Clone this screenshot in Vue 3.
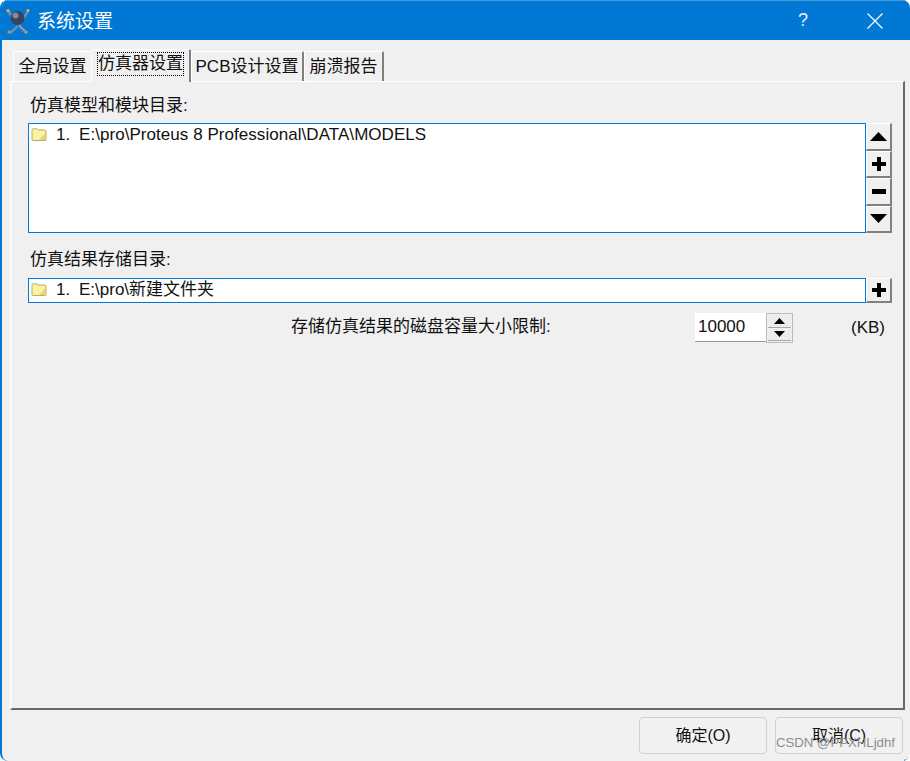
<script setup>
const tabs = [
  { label: '全局设置', cls: 'w1' },
  { label: '仿真器设置', cls: 'w2 active' },
  { label: 'PCB设计设置', cls: 'w3' },
  { label: '崩溃报告', cls: 'w4' },
]
</script>

<template>
  <div class="window">
    <header class="titlebar">
      <svg class="logo" width="26" height="28" viewBox="0 0 26 28">
        <path d="M3 4C8 12 14 21 22 26" stroke="#8fb0d8" stroke-width="2.500" fill="none"/>
        <path d="M23 4C18 13 12 21 5 26" stroke="#6d8dbc" stroke-width="2.500" fill="none"/>
        <path d="M3 4C9 15 14 22 22 26" stroke="#41587f" stroke-width="1" fill="none"/>
        <circle cx="12.500" cy="11" r="7" fill="#39445c"/>
        <circle cx="10.500" cy="8.500" r="3" fill="#7f8ba3"/>
        <circle cx="3" cy="3.500" r="1.600" fill="#d8b24c"/>
        <circle cx="23" cy="3.500" r="1.600" fill="#d8b24c"/>
        <circle cx="4" cy="25" r="1.600" fill="#c79a3a"/>
        <circle cx="21" cy="25" r="1.600" fill="#c79a3a"/>
      </svg>
      <span class="title">系统设置</span>
      <span class="help">?</span>
      <svg class="close" width="16" height="16" viewBox="0 0 16 16">
        <path d="M0.500 0.500 15.500 15.500M15.500 0.500 0.500 15.500" stroke="#fff" stroke-width="1.200" fill="none"/>
      </svg>
    </header>

    <div class="client">
      <nav class="tabs">
        <div v-for="t in tabs" :key="t.label" class="tab" :class="t.cls">
          <span class="tab-text">{{ t.label }}</span>
        </div>
      </nav>

      <section class="panel">
        <div class="label first">仿真模型和模块目录:</div>
        <div class="list-row">
          <div class="list tall">
            <svg class="folder" width="16" height="13" viewBox="0 0 16 13">
              <path d="M1 3V1.500L2 .8H6L7 2H14L15 3V12L14 12.500H2L1 12Z" fill="#faf29e" stroke="#b5ad6c" stroke-width="1"/>
              <path d="M8 12 14.500 5V12Z" fill="#f0d070"/>
            </svg>
            <span class="num">1.</span>
            <span class="path wide">E:\pro\Proteus 8 Professional\DATA\MODELS</span>
          </div>
          <div class="btn-col">
            <button class="sq"><svg width="17" height="9" viewBox="0 0 17 9"><path d="M8.500 0 17 9H0Z" fill="#000"/></svg></button>
            <button class="sq"><svg width="14" height="14" viewBox="0 0 14 14"><path d="M5 0h4v5h5v4H9v5H5V9H0V5h5Z" fill="#000"/></svg></button>
            <button class="sq"><svg width="14" height="5" viewBox="0 0 14 5"><path d="M0 0h14v5H0Z" fill="#000"/></svg></button>
            <button class="sq"><svg width="17" height="9" viewBox="0 0 17 9"><path d="M0 0H17L8.500 9Z" fill="#000"/></svg></button>
          </div>
        </div>

        <div class="label second">仿真结果存储目录:</div>
        <div class="list-row">
          <div class="list short">
            <svg class="folder" width="16" height="13" viewBox="0 0 16 13">
              <path d="M1 3V1.500L2 .8H6L7 2H14L15 3V12L14 12.500H2L1 12Z" fill="#faf29e" stroke="#b5ad6c" stroke-width="1"/>
              <path d="M8 12 14.500 5V12Z" fill="#f0d070"/>
            </svg>
            <span class="num">1.</span>
            <span class="path">E:\pro\新建文件夹</span>
          </div>
          <button class="sq single"><svg width="14" height="14" viewBox="0 0 14 14"><path d="M5 0h4v5h5v4H9v5H5V9H0V5h5Z" fill="#000"/></svg></button>
        </div>

        <div class="limit-row">
          <span class="limit-label">存储仿真结果的磁盘容量大小限制:</span>
          <div class="spin-input">10000</div>
          <div class="spinner">
            <div class="spin-btn"><svg width="11" height="6" viewBox="0 0 11 6"><path d="M5.500 0 11 6H0Z" fill="#000"/></svg></div>
            <div class="spin-btn"><svg width="11" height="6" viewBox="0 0 11 6"><path d="M0 0H11L5.500 6Z" fill="#000"/></svg></div>
          </div>
          <span class="unit">(KB)</span>
        </div>
      </section>

      <footer class="footer">
        <button class="action">确定(O)</button>
        <button class="action">取消(C)</button>
      </footer>
    </div>
    <span class="watermark">CSDN @PPXHLjdhf</span>
    <svg class="corner" width="6" height="4" viewBox="0 0 6 4"><path d="M0 3.500C3 3.500 5 2.500 5.500 0" stroke="#0078d4" stroke-width="1.500" fill="none"/></svg>
  </div>
</template>

<style>
html, body { margin: 0; background: #fff; overflow: hidden; }
</style>

<style scoped>
.window {
  position: relative;
  width: 910px;
  height: 761px;
  box-sizing: border-box;
  display: flex;
  flex-direction: column;
  overflow: hidden;
  background: #f0f0f0;
  border-radius: 8px;
  border-left: 2px solid #0078d4;
  font-family: "Liberation Sans", "Noto Sans CJK SC", sans-serif;
  font-size: 17px;
  color: #111;
}
.titlebar {
  height: 40px;
  flex: none;
  margin-left: -2px;
  background: #0078d4;
  border-top: 1px solid #3f9be0;
  box-sizing: border-box;
  display: flex;
  align-items: center;
  color: #fff;
  position: relative;
}
.logo { margin-left: 5px; flex: none; }
.title { margin-left: 6px; margin-top: -2px; font-size: 19px; }
.help { position: absolute; left: 798px; top: 9px; font-size: 18px; color: #e8f2fb; }
.close { position: absolute; left: 867px; top: 12px; }
.client { flex: 1; display: flex; flex-direction: column; min-height: 0; padding-left: 8px; }
.tabs { height: 41px; display: flex; align-items: flex-end; padding-left: 3px; flex: none; }
.tab {
  box-sizing: border-box;
  height: 30px;
  padding-bottom: 5px;
  display: flex;
  align-items: center;
  justify-content: center;
  border-top: 1px solid #fff;
  border-left: 1px solid #fff;
  border-right: 2px solid #808080;
  border-radius: 2px 2px 0 0;
  background: #f0f0f0;
  white-space: nowrap;
}
.w1 { width: 78px; border-right: 0; }
.w2 { width: 100px; }
.w3 { width: 113px; }
.w4 { width: 80px; }
.tab.active { height: 33px; margin-bottom: -1px; position: relative; z-index: 1; padding-bottom: 4px; }
.tab.active .tab-text { outline: 1px dotted #000; outline-offset: 0; line-height: 22px; }
.panel {
  height: 629px;
  width: 895px;
  flex: none;
  box-sizing: border-box;
  padding: 0 11px 0 18px;
  border-top: 1px solid #fff;
  border-left: 2px solid #fbfbfb;
  border-right: 2px solid #696969;
  border-bottom: 2px solid #696969;
  margin-right: 5px;
}
.label { line-height: 20px; }
.first { padding-top: 14px; padding-bottom: 7px; }
.second { padding-top: 17px; padding-bottom: 8px; }
.list-row { display: flex; margin-left: -2px; }
.list {
  box-sizing: border-box;
  width: 839px;
  background: #fff;
  border: 1px solid #0078d4;
  display: flex;
  align-items: flex-start;
  padding: 1px 0 0 2px;
  line-height: 20px;
}
.tall { height: 110px; }
.short { height: 25px; }
.folder { margin-top: 3px; flex: none; }
.num { margin-left: 9px; width: 23px; flex: none; }
.path { white-space: nowrap; }
.wide { letter-spacing: 0.05px; }
.btn-col { display: flex; flex-direction: column; }
.sq {
  box-sizing: border-box;
  width: 26px;
  height: 27.500px;
  padding: 0;
  margin: 0;
  display: flex;
  align-items: center;
  justify-content: center;
  background: #f0f0f0;
  border: 1px solid #fff;
  border-right: 2px solid #808080;
  border-bottom: 2px solid #808080;
}
.single { height: 25px; }
.limit-row { display: flex; align-items: flex-start; margin-top: 10px; }
.limit-label { margin-left: 261px; width: 404px; line-height: 27px; white-space: nowrap; flex: none; }
.spin-input {
  box-sizing: border-box;
  width: 71px;
  height: 29px;
  background: #fff;
  border-bottom: 1px solid #9a9a9a;
  padding-left: 3px;
  line-height: 27px;
  flex: none;
}
.spinner {
  box-sizing: border-box;
  width: 27px;
  height: 30px;
  border: 1px solid #bcbcbc;
  padding: 1px;
  flex: none;
  display: flex;
  flex-direction: column;
  gap: 1px;
}
.spin-btn {
  flex: 1;
  background: #ececec;
  border-bottom: 1px solid #a8a8a8;
  display: flex;
  align-items: center;
  justify-content: center;
}
.unit { margin-left: 58px; line-height: 29px; white-space: nowrap; }
.footer {
  flex: 1;
  display: flex;
  justify-content: flex-end;
  gap: 8px;
  padding: 7px 7px 0 0;
  align-items: flex-start;
}
.action {
  box-sizing: border-box;
  width: 128px;
  height: 37px;
  background: #f1f1f1;
  border: 1px solid #cfcfcf;
  border-radius: 4px;
  font: inherit;
  font-size: 16px;
  color: #111;
  padding: 0 0 3px;
}
.watermark {
  position: absolute;
  left: 774px;
  top: 735px;
  font-size: 13.200px;
  color: #8e8e8e;
  white-space: nowrap;
}
.corner { position: absolute; right: 0; bottom: 0; }
</style>
